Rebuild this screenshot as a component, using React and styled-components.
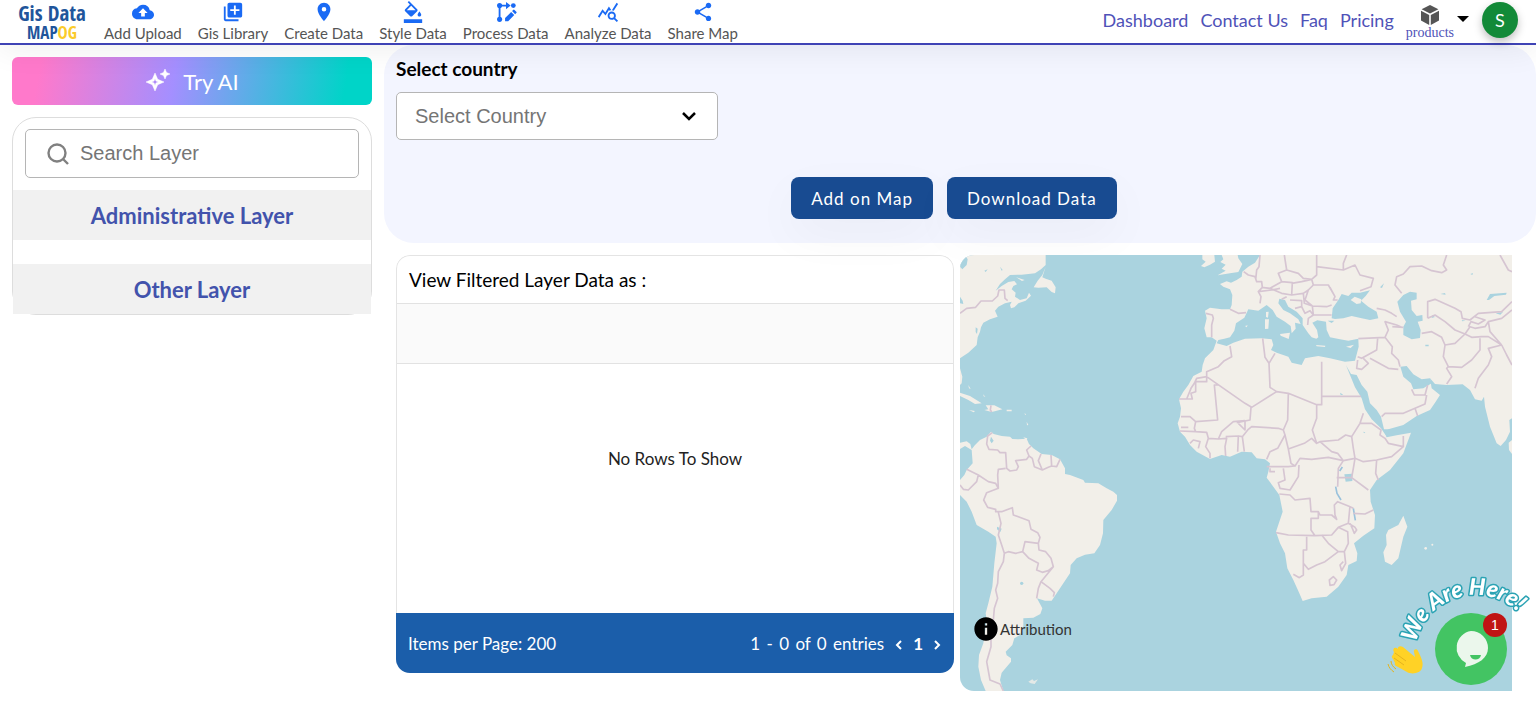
import React from 'react';
import styled, { createGlobalStyle } from 'styled-components';
import {
  MdCloudUpload,
  MdLibraryAdd,
  MdLocationOn,
  MdFormatColorFill,
  MdQueryStats,
  MdShare,
  MdInfo,
} from 'react-icons/md';

const GlobalStyle = createGlobalStyle`
  * {
    box-sizing: border-box;
  }
  body {
    margin: 0;
    background: #fff;
    color: #000;
    font-family: Lato, 'Liberation Sans', sans-serif;
    overflow-x: hidden;
  }
`;

const StyledHeader = styled.header`
  position: relative;
  z-index: 5;
  display: flex;
  align-items: center;
  height: 45px;
  padding: 0 18px;
  border-bottom: 2px solid #3f43b5;
  background: #fff;
  box-shadow: 0 4px 32px #00000012;
`;
const StyledLogo = styled.a`
  display: flex;
  flex-direction: column;
  align-items: center;
  width: 68px;
  margin-right: 18px;
  font-family: 'Open Sans Condensed', 'Liberation Sans Narrow', 'DejaVu Sans Condensed', sans-serif;
  font-weight: bold;
  font-size: 21px;
  line-height: 21px;
  color: #1f559b;
  text-decoration: none;
  white-space: nowrap;
`;
const StyledLogoSub = styled.span`
  font-size: 17px;
  line-height: 17px;
`;
const StyledLogoMark = styled.span`
  color: #fbcb2b;
`;
const StyledTools = styled.nav`
  display: flex;
  gap: 16px;
  flex: 1;
`;
const StyledTool = styled.a`
  display: flex;
  flex-direction: column;
  align-items: center;
  font-size: 15px;
  line-height: 20px;
  color: #555;
  text-decoration: none;
  white-space: nowrap;

  svg {
    width: 22px;
    height: 22px;
    color: #1a6af4;
  }
`;
const StyledLinks = styled.nav`
  display: flex;
  align-items: center;
  gap: 12px;
  margin-bottom: 3px;
`;
const StyledLink = styled.a`
  font-size: 18px;
  line-height: 24px;
  color: #4f52b8;
  text-decoration: none;
  white-space: nowrap;
`;
const StyledProducts = styled.button`
  display: flex;
  align-items: center;
  gap: 2px;
  padding: 3px 0 0;
  border: 0;
  background: none;
  font-family: 'Liberation Serif', serif;
  font-size: 14px;
  line-height: 14px;
  color: #4f52b8;
`;
const StyledProductsLabel = styled.span`
  display: flex;
  flex-direction: column;
  align-items: center;
`;
const StyledAvatar = styled.button`
  width: 36px;
  height: 36px;
  padding: 0;
  border: 0;
  border-radius: 50%;
  background: #128a38;
  color: #fff;
  font-family: inherit;
  font-size: 18px;
  box-shadow: 0 4px 8px #00000040;
`;

const StyledPage = styled.div`
  display: flex;
  align-items: flex-start;
`;
const StyledSidebar = styled.aside`
  flex: 0 0 25%;
  min-width: 0;
  padding: 12px;
`;
const StyledTryAi = styled.button`
  display: flex;
  align-items: center;
  justify-content: center;
  gap: 12px;
  width: 100%;
  height: 48px;
  border: 0;
  border-radius: 6px;
  background: linear-gradient(100deg, #ff79cb 8%, #a48fff 45%, #00d4c8 92%);
  color: #fff;
  font-family: inherit;
  font-size: 22px;
`;
const StyledLayers = styled.div`
  margin-top: 12px;
  border: 1px solid #ddd;
  border-radius: 24px;
`;
const StyledSearch = styled.label`
  display: flex;
  align-items: center;
  gap: 10px;
  height: 49px;
  margin: 11px 12px 12px;
  padding: 0 20px;
  border: 1px solid #b5b5b5;
  border-radius: 5px;

  svg {
    flex: none;
  }
  input {
    width: 100%;
    min-width: 0;
    padding: 0;
    border: 0;
    outline: 0;
    background: none;
    font-family: 'Liberation Sans', sans-serif;
    font-size: 20px;
  }
  input::placeholder {
    color: #757575;
  }
`;
const StyledLayer = styled.h2`
  margin: 0;
  padding: 13px 0 11px;
  background: #f1f1f1;
  color: #4253ac;
  font-size: 22px;
  line-height: 26px;
  font-weight: bold;
  text-align: center;

  & + & {
    margin-top: 24px;
  }
`;

const StyledMain = styled.main`
  flex: 1;
  min-width: 0;
`;
const StyledFilter = styled.section`
  height: 198px;
  padding: 12px 24px 12px 12px;
  border-radius: 30px;
  background: #f3f5ff;
`;
const StyledFilterLabel = styled.label`
  display: block;
  font-size: 19px;
  line-height: 24px;
  font-weight: bold;
`;
const StyledSelectBox = styled.div`
  display: flex;
  align-items: center;
  width: 322px;
  height: 48px;
  margin-top: 11px;
  padding-right: 20px;
  border: 1px solid #b5b5b5;
  border-radius: 5px;
  background: #fff;
`;
const StyledSelect = styled.select`
  flex: 1;
  height: 46px;
  padding: 0 18px;
  border: 0;
  outline: 0;
  appearance: none;
  background: none;
  color: #757575;
  font-family: 'Liberation Sans', sans-serif;
  font-size: 20px;
`;
const StyledActions = styled.div`
  display: flex;
  justify-content: center;
  gap: 14px;
  margin-top: 37px;
`;
const StyledAction = styled.button`
  height: 42px;
  padding: 0 20px;
  border: 0;
  border-radius: 8px;
  background: #184b91;
  color: #fff;
  font-family: inherit;
  font-size: 17px;
  letter-spacing: 1px;
  box-shadow: 0 16px 48px #0000000a;
`;
const StyledResults = styled.div`
  display: flex;
  align-items: flex-start;
  gap: 6px;
  padding: 12px 24px 12px 12px;
`;
const StyledGrid = styled.section`
  flex: 558;
  min-width: 0;
  border-radius: 14px;
  overflow: hidden;
`;
const StyledGridBody = styled.div`
  border: 1px solid #e4e4e4;
  border-bottom: 0;
  border-radius: 14px 14px 0 0;
  overflow: hidden;
`;
const StyledGridTitle = styled.h3`
  margin: 0;
  padding: 12px 12px 11px;
  font-size: 19px;
  line-height: 24px;
  font-weight: normal;
`;
const StyledTable = styled.table`
  width: 100%;
  border-collapse: collapse;

  th {
    height: 60px;
    border-top: 1px solid #e2e2e2;
    border-bottom: 1px solid #e2e2e2;
    background: #fafafa;
  }
  td {
    height: 249px;
    padding: 0 0 60px;
    font-size: 17px;
    text-align: center;
    color: #222;
  }
`;
const StyledPager = styled.footer`
  display: flex;
  align-items: center;
  justify-content: space-between;
  height: 60px;
  padding: 2px 12px 0;
  background: #1b5eaa;
  color: #fff;
  font-size: 17px;
  line-height: 24px;
`;
const StyledPages = styled.div`
  display: flex;
  align-items: center;
  gap: 10px;
  word-spacing: 2px;

  button {
    display: flex;
    padding: 0;
    border: 0;
    background: none;
    color: inherit;
  }
`;
const StyledMap = styled.section`
  position: relative;
  flex: 552;
  min-width: 0;
  height: 436px;
  border-radius: 14px 0 0 14px;
  background: #aad3df;
  overflow: hidden;
`;
const StyledMapDrawing = styled.svg`
  display: block;
  width: 100%;
  height: 100%;
`;
const StyledAttribution = styled.a`
  position: absolute;
  left: 12px;
  bottom: 48px;
  display: flex;
  align-items: center;
  color: #000;
  font-size: 15px;
  line-height: 20px;
  text-decoration: none;

  span {
    color: #333;
  }
`;
const StyledChat = styled.div`
  position: fixed;
  right: 0;
  bottom: 17px;
  z-index: 8;
  width: 150px;
  height: 120px;
`;
const StyledGreeting = styled.svg`
  display: block;
  overflow: visible;
`;
const StyledChatButton = styled.button`
  position: absolute;
  right: 29px;
  bottom: 4px;
  display: flex;
  align-items: center;
  justify-content: center;
  width: 72px;
  height: 72px;
  padding: 0;
  border: 0;
  border-radius: 50%;
  background: #43c463;
`;
const StyledBadge = styled.span`
  position: absolute;
  top: 0;
  right: 0;
  width: 24px;
  border-radius: 50%;
  background: #c01414;
  color: #fff;
  font-family: 'Liberation Sans', sans-serif;
  font-size: 14px;
  line-height: 24px;
`;

const ProcessIcon = () => (
  <svg viewBox="0 0 24 24" fill="currentColor">
    <circle cx="5" cy="5" r="2.8" />
    <circle cx="20" cy="5" r="2.6" />
    <circle cx="5" cy="20" r="2.8" />
    <path d="M4 5h2v15H4zM6 4h6V1l5 4-5 4V6H6z" />
    <path d="M11 22v-3.4l6.6-6.6 3.4 3.4-6.6 6.6zM18.6 11l1.2-1.2a1 1 0 0 1 1.5 0l1.9 1.9a1 1 0 0 1 0 1.5L22 14.4z" />
  </svg>
);

const CubeIcon = () => (
  <svg width="20" height="22" viewBox="0 0 20 22" fill="#555">
    <path d="M10 1l8.4 4.3L10 9.6 1.6 5.3z" />
    <path d="M1 6.8l8.2 4.1v10L1 16.6zM19 6.8l-8.2 4.1v10l8.2-4.3z" />
  </svg>
);

const SparkIcon = () => (
  <svg width="26" height="26" viewBox="0 0 26 26" fill="#fff" stroke="#fff" strokeWidth=".5" strokeLinejoin="round">
    <path
      fillRule="evenodd"
      d="M10 5l2.7 6.3L19 14l-6.3 2.7L10 23l-2.7-6.3L1 14l6.3-2.7zm0 5.6l-1 2.4-2.4 1 2.4 1 1 2.4 1-2.4 2.4-1-2.4-1z"
    />
    <path d="M20 1l1.5 3.5L25 6l-3.5 1.5L20 11l-1.5-3.5L15 6l3.5-1.5z" />
  </svg>
);

const tools = [
  { label: 'Add Upload', icon: <MdCloudUpload /> },
  { label: 'Gis Library', icon: <MdLibraryAdd /> },
  { label: 'Create Data', icon: <MdLocationOn /> },
  { label: 'Style Data', icon: <MdFormatColorFill /> },
  { label: 'Process Data', icon: <ProcessIcon /> },
  { label: 'Analyze Data', icon: <MdQueryStats /> },
  { label: 'Share Map', icon: <MdShare /> },
];
const links = ['Dashboard', 'Contact Us', 'Faq', 'Pricing'];

const Header = () => (
  <StyledHeader>
    <StyledLogo href="#">
      <span>Gis Data</span>
      <StyledLogoSub>
        MAP<StyledLogoMark>OG</StyledLogoMark>
      </StyledLogoSub>
    </StyledLogo>
    <StyledTools>
      {tools.map(({ label, icon }) => (
        <StyledTool key={label} href="#">
          {icon}
          {label}
        </StyledTool>
      ))}
    </StyledTools>
    <StyledLinks>
      {links.map(label => (
        <StyledLink key={label} href="#">{label}</StyledLink>
      ))}
      <StyledProducts type="button">
        <StyledProductsLabel>
          <CubeIcon />
          products
        </StyledProductsLabel>
        <svg width="14" height="20" viewBox="0 0 14 20">
          <path d="M1 4h12L7 10z" fill="#000" />
        </svg>
      </StyledProducts>
      <StyledAvatar type="button">S</StyledAvatar>
    </StyledLinks>
  </StyledHeader>
);

const Sidebar = () => (
  <StyledSidebar>
    <StyledTryAi type="button">
      <SparkIcon />
      Try AI
    </StyledTryAi>
    <StyledLayers>
      <StyledSearch>
        <svg width="24" height="24" viewBox="0 0 24 24" fill="none" stroke="#808080" strokeWidth="2.4">
          <circle cx="11" cy="11" r="8.5" />
          <path d="M17 17l5 5" />
        </svg>
        <input type="text" aria-label="Search Layer" placeholder="Search Layer" />
      </StyledSearch>
      <StyledLayer>Administrative Layer</StyledLayer>
      <StyledLayer>Other Layer</StyledLayer>
    </StyledLayers>
  </StyledSidebar>
);

const WorldMap = () => (
  <StyledMapDrawing viewBox="15 15 1656 1308" preserveAspectRatio="xMidYMid slice" strokeLinejoin="round">
    <g fill="#f2efe9">
      {/* North America and the Caribbean */}
      <path d="M15 15H272V45L258 58 240 70 200 74 165 75 150 88 135 102 122 122 140 108 160 96 178 93 186 103 175 108 170 118 182 128 180 140 195 150 215 145 222 128 228 137 212 152 190 160 178 172 168 175 165 165 170 155 150 160 130 170 120 182 128 200 105 208 85 218 78 232 75 245 68 262 65 285 40 308 15 325z" />
      <path d="M272 50L262 75 248 92 236 112 250 113 275 112 290 126 300 130 302 112 290 92 272 86 262 82z" />
      <path d="M15 355L22 380 20 400 15 405zM15 428L45 438 80 460 60 462 40 450 15 438zM88 480L100 478 92 466 118 466 142 478 125 482 110 486zM155 479h15v5h-15zM42 480l18 3-4 4zM184 82l25 8-8 3z" />
      <path d="M40 405l7 12-5-2zM60 420l8 10M85 433l6 8-5-2zM209 488l4 6-3 1zM215 515l5 10-4 1zM205 562l12 3-3 6z" />
      {/* South America */}
      <path d="M15 578L35 574 46 582 50 598 60 585 75 570 95 560 108 545 116 552 140 558 165 560 172 567 190 568 215 566 222 582 235 595 260 612 290 615 315 628 330 655 330 672 345 675 385 690 390 698 430 700 455 715 475 725 486 735 486 752 470 780 445 810 444 850 435 885 418 910 390 914 365 925 347 945 345 970 325 1000 305 1030 290 1052 270 1052 246 1045 262 1075 256 1092 235 1103 205 1105 205 1130 195 1155 178 1165 172 1185 152 1205 155 1216 168 1225 168 1235 140 1268 135 1290 145 1323H92L78 1290 70 1250 72 1215 85 1180 95 1110 92 1090 100 1060 112 1010 118 940 125 880 122 860 100 845 65 825 50 785 35 755 15 735V690L28 675 35 660 53 640 50 600 30 588 15 597z" />
      <path d="M220 1295l12-7 5 5 12-5-10 14-12-2z" opacity=".8" />
      {/* Ireland and Britain */}
      <path d="M738 48L752 35 742 28V15H778L780 35 765 44 748 52zM800 15L805 28 796 36 812 44 800 56 812 62 788 76 825 70 850 66 862 42 850 25 848 15z" />
      {/* Eurasia joined with Africa */}
      <path d="M915 15L900 38 880 50 862 65 860 80 845 90 828 98 815 94 795 102 805 110 825 118 832 135 830 165 825 178 800 178 765 173 750 182 755 205 748 235 755 262 770 262 785 272 775 300 750 325 743 345 740 365 715 378 700 405 685 425 672 448 678 475 675 500 668 520 675 545 690 560 705 585 725 605 765 627 800 615 825 620 860 605 890 607 905 625 930 628 945 640 940 665 935 683 955 710 973 735 983 785 963 845 975 880 990 910 997 955 1015 990 1033 1030 1043 1053 1070 1045 1115 1040 1150 1010 1175 975 1180 945 1205 933 1207 910 1197 880 1225 857 1258 835 1260 795 1247 755 1245 720 1265 690 1305 660 1345 610 1368 548 1325 556 1295 562 1290 545 1300 538 1345 525 1385 498 1425 480 1440 458 1455 435 1430 415 1425 385 1440 402 1475 405 1523 403 1545 420 1560 448 1580 452 1587 440 1590 470 1605 530 1625 580 1637 588 1653 570 1665 545 1663 510 1671 505V15z" />
      <path d="M1671 570L1661 578 1662 600 1671 612zM1345 797L1357 830 1345 860 1330 925 1310 945 1290 935 1285 907 1295 885 1293 855 1300 840 1330 825z" />
      <circle cx="1412" cy="895" r="4" />
      <circle cx="1432" cy="884" r="3" />
    </g>
    <g fill="#aad3df">
      <path d="M15 28L32 18 38 28 35 45 22 58 15 50zM15 140l8 12 2 10-10-2zM62 232l6 4-2 16-4-6zM135 50l8 10-3 2zM88 62l10-4-6 8zM108 560l8 12-6 8-5-8z" />
      <circle cx="200" cy="1000" r="5" />
      <path d="M126 830l14 6-4 10-10-8z" />
      {/* Mediterranean */}
      <path d="M785 280L790 270 808 266 825 262 838 242 843 220 868 203 880 178 910 182 935 165 953 180 965 200 990 215 1007 228 1010 250 1022 236 1020 218 1037 222 1030 208 1005 190 985 180 970 160 973 146 990 150 1000 170 1025 185 1043 205 1043 225 1060 250 1070 262 1084 266 1090 262 1086 240 1072 218 1087 211 1113 215 1115 240 1125 262 1155 268 1180 272 1210 266 1211 290 1200 332 1170 335 1125 325 1090 318 1050 325 1040 345 1010 338 1000 320 965 308 948 300 955 285 950 268 920 265 870 266 835 278 815 288z" />
      {/* Black Sea, Azov, Marmara */}
      <path d="M1130 205L1133 175 1150 150 1160 132 1180 138 1190 128 1215 128 1245 121 1232 138 1218 152 1240 170 1265 185 1270 205 1245 210 1220 205 1190 198 1165 205 1140 207zM1118 212h20l-8 7z" />
      {/* Caspian and Aral */}
      <path d="M1327 155L1345 135 1365 125 1385 128 1385 148 1368 152 1370 180 1385 198 1402 195 1403 212 1388 215 1397 240 1395 264 1370 268 1345 255 1345 230 1353 215 1335 185z" />
      <path d="M1595 150L1605 132 1655 128 1653 134 1618 138 1602 150zM1456 132l14-3 2 5zM1622 190l22-4-8 8zM1432 195l8 6-10 3zM1411 284h10v5h-10zM1546 72l8-3-2 6zM1275 112l12-12-6 14zM1520 210l12 2-10 2z" />
      {/* Red Sea and Persian Gulf */}
      <path d="M1173 346L1188 372 1205 375 1220 405 1237 425 1245 460 1265 480 1278 500 1287 538 1302 538 1296 562 1278 535 1250 508 1230 478 1220 445 1200 412 1185 375z" />
      <path d="M1336 350L1355 348 1375 373 1400 388 1425 385 1430 400 1405 415 1375 418 1368 400 1345 380z" />
      <path d="M1168 673l24-2v22l-20 2zM1225 545l6 2-4 3zM1155 428l10 6-8 1z" />
      <path d="M1142 710l4 20 12 20M1162 651l-8 12M1195 775l6 36" fill="none" stroke="#9ac2dc" strokeWidth="5" />
    </g>
    <g fill="#f2efe9">
      <path d="M975 252l30-4-4 19-24-10zM930 208h12l-2 28-10 1zM933 186l8-1-2 18-6-2zM1083 285l28 2-1 4-25-2zM1173 290l24-6-10 10zM1187 150l12-10 20 8-2 12-12 2zM870 228l8-2-3 6z" />
    </g>
    <g fill="none" stroke="#d6c5d2" strokeWidth="5">
      {/* Americas */}
      <path d="M15 190L35 175 62 172 78 153 112 153 128 138 132 120 148 120 150 145 158 152M108 466l-2 14 4 6" />
      <path d="M112 548L98 558 95 582 102 598 128 600 135 608 152 608 155 655 165 663 185 660 190 650 182 632 215 628 222 618 215 600 228 588M222 618L232 625 238 650 262 660 250 632 258 612M262 660L280 652 290 648 288 615M290 648L305 650 315 628" />
      <path d="M152 655L130 658 128 675 130 715 122 700 100 695 70 675 35 658M70 675L65 695 40 720 25 718 15 705M130 715L95 728 86 750 98 772 122 778 122 785 140 785 172 773 175 795 222 812 228 838 248 848 255 862 250 880 210 875 203 905M130 787L138 820 130 855 140 885 148 910 160 905 182 910 203 905 222 925 250 940 245 960 262 967 280 962 295 950 288 925 272 905 252 900 250 880M148 910L145 935 130 965 128 1000 122 1020 128 1045 118 1075 115 1110 108 1150 108 1190 95 1235 105 1290 135 1302 145 1323M295 950L258 995 250 1015 245 1045M258 995L285 1015 298 1028 295 1040" />
      {/* West and North Africa */}
      <path d="M825 288L830 320 808 332 790 350 755 365V380L725 385 718 400 708 415 695 447H672M755 380V395H722V425L708 430 712 447H695M755 380L870 460 890 472 965 425 1000 430 1085 464H1100V335M790 405H778L788 510 722 515 705 500H678M722 515L718 535 722 545 675 543M678 532h22M722 545L755 547 760 565 752 590 765 610V625M705 580L715 570 735 575 730 595M760 565L790 567 800 545 835 515 870 512M790 567L815 565 810 590 812 618M812 560L850 558 848 605M850 558L862 560 868 605M870 512V540L850 520M862 560L880 538 890 530 970 535 985 540 990 555 968 595 945 605 935 628M888 472L885 510 845 518M1000 430L998 510 985 540M965 425L945 412 942 340 930 322 923 265M942 340L960 310M1085 464V505L1072 540 1085 580" />
      {/* Central and East Africa */}
      <path d="M1100 439H1218M1225 490L1215 520 1190 560 1172 555 1150 570 1095 575 1085 580 1070 565 1048 580 1000 597 990 555M1215 520L1250 520 1278 540 1275 555 1290 565 1300 580 1345 590 1310 620 1265 630 1225 635 1200 625 1165 632 1148 610 1130 605 1095 575M1190 560L1195 595 1200 625M1000 597L1008 640 1020 648 1035 625 1070 628 1120 622 1165 632M935 650H1000L1018 648M945 655V665H960M985 655L990 690 970 698 975 715 1005 720 1030 680 1032 645M973 732L1005 735 1020 750 1065 745 1068 785 1090 785 1095 795 1130 795 1145 808 1140 795 1138 765 1148 755 1180 768 1195 775M1090 785V805H1068V840L1080 857M963 848L1000 855 1080 857 1130 855 1150 832 1180 820 1185 768M1180 820L1200 832 1205 840 1198 850 1192 835 1185 820M1195 790L1230 792 1255 780M1055 860V900H1045V975L1033 983 1015 973M1045 940L1060 958 1085 945 1110 935 1150 905 1168 905 1180 880 1178 845 1150 832M1100 855L1120 880 1150 905M1168 905L1172 940 1160 962 1155 945 1165 935M1145 683H1190L1240 720M1165 632L1150 655 1148 710M1200 625L1195 655 1190 683M1265 630L1262 670 1270 690M1345 558V590" />
      <path d="M1123 990l12-10 10 10-8 14-12 2z" />
      {/* Middle East */}
      <path d="M1210 266L1290 262 1312 290 1310 310 1330 330 1335 350M1268 265L1265 300 1220 325 1208 320M1208 330L1205 355 1220 358 1240 340 1225 325M1245 325L1300 355 1330 358M1280 500L1290 490 1345 490 1380 475 1410 462 1415 435M1380 475L1388 498M1370 418L1378 435 1410 435 1418 405M1312 230L1345 232M1290 262L1300 240 1290 215 1325 225 1340 232" />
      {/* Europe */}
      <path d="M825 178L850 190 873 188M866 65L880 75 900 80 905 95 920 95 922 112 910 125 918 140 915 160M915 15L912 50 905 60 902 90M988 15L995 60 970 70 980 95 945 115 920 112M995 60L1030 70 1045 85 1070 88 1085 75 1085 15M1085 50L1165 60 1165 40 1175 15M1165 60L1200 45 1215 75 1255 85 1248 110 1215 122M1070 88L1075 105 1060 120 1045 130 1010 135 980 130 945 115M1075 105L1120 105 1140 140 1135 150 1148 150M1060 120L1050 150 1072 168 1115 170 1130 165M1045 130L1048 160 1072 168 1075 195 1130 195M1005 150L1040 152 1040 170 1020 175M1040 170L1050 190 1065 182 1075 195 1060 205 1058 225M1140 140l-15-28M1265 175L1290 180 1310 190 1325 200M753 190L772 195 775 205 770 225V262M910 125L950 120 975 115M1010 100L1040 95 1070 88M980 95L1012 98 1010 135M995 140l-15 8" />
      {/* Central and South Asia */}
      <path d="M1340 130L1320 105 1325 80 1345 72 1365 50 1400 48 1430 62 1460 68 1475 60 1465 45 1475 15M1418 205V155L1440 148 1500 175 1518 185 1522 205 1545 210 1570 190 1640 185 1671 155M1418 205L1440 195 1470 215 1500 240 1530 252 1545 230 1560 235 1590 230 1600 215 1640 205 1671 180M1400 250L1430 245 1460 262 1470 285 1500 280 1530 252 1550 262 1580 260 1600 260 1640 285M1470 285L1465 320 1480 350 1475 355 1490 380 1475 402M1480 350L1520 352 1550 330 1575 300 1575 265M1560 415L1570 385 1600 345 1610 320 1600 295 1640 285 1655 315 1671 345M1560 200L1590 210 1570 222 1548 215 1540 230M1635 15L1660 60 1671 65M1600 215L1605 245 1640 285" />
    </g>
  </StyledMapDrawing>
);

const ChatWidget = () => (
  <StyledChat>
    <StyledGreeting width="150" height="120" viewBox="0 0 150 120">
      <defs>
        <path id="greeting-arc" d="M30 74A61 61 0 0 1 149 73" />
      </defs>
      <text
        fontFamily="Lato, sans-serif"
        fontWeight="900"
        fontStyle="italic"
        fontSize="23"
        fill="#fff"
        stroke="#2ba3b4"
        strokeWidth="3"
        strokeLinejoin="round"
        paintOrder="stroke"
      >
        <textPath href="#greeting-arc">We Are Here!</textPath>
      </text>
      <path
        d="M12 80c-3-3-6 0-4 3l-1 3c-2 1-1 3 0 4l2 4c-1 2 1 3 3 4l9 5c5 3 14 1 15-4 2-5-1-11-4-17-1-3-5-2-4 1l1 5-12-10c-3-2-6 0-5 2z"
        fill="#ffd226"
      />
      <path d="M5 92c0 3 2 6 5 8M2 95c1 4 3 6 6 8M9 84l11 8M8 89l10 7" fill="none" stroke="#e4b31f" strokeWidth="1" />
    </StyledGreeting>
    <StyledChatButton type="button" aria-label="Open chat">
      <svg width="36" height="38" viewBox="0 0 36 38">
        <path d="M18 1a17 17 0 0 1 17 17c0 10-9 16-23 19l1-4A17 17 0 0 1 18 1z" fill="#ebf7ec" />
        <path d="M17 25h11c-1 6-10 6-11 0z" fill="#43c463" />
      </svg>
      <StyledBadge>1</StyledBadge>
    </StyledChatButton>
  </StyledChat>
);

const Chevron = ({ flip }) => (
  <svg width="9" height="14" viewBox="0 0 9 14" fill="none" stroke="currentColor" strokeWidth="2">
    <path d={flip ? 'M2 4l4 4-4 4' : 'M7 4L3 8l4 4'} />
  </svg>
);

const App = () => (
  <>
    <GlobalStyle />
    <Header />
    <StyledPage>
      <Sidebar />
      <StyledMain>
        <StyledFilter>
          <StyledFilterLabel htmlFor="country">Select country</StyledFilterLabel>
          <StyledSelectBox>
            <StyledSelect id="country">
              <option>Select Country</option>
            </StyledSelect>
            <svg width="16" height="16" viewBox="0 0 16 16" fill="none" stroke="#000" strokeWidth="2.5">
              <path d="M2 5l6 6 6-6" />
            </svg>
          </StyledSelectBox>
          <StyledActions>
            <StyledAction type="button">Add on Map</StyledAction>
            <StyledAction type="button">Download Data</StyledAction>
          </StyledActions>
        </StyledFilter>
        <StyledResults>
          <StyledGrid>
            <StyledGridBody>
              <StyledGridTitle>View Filtered Layer Data as :</StyledGridTitle>
              <StyledTable>
                <thead>
                  <tr><th aria-label="Columns" /></tr>
                </thead>
                <tbody>
                  <tr><td>No Rows To Show</td></tr>
                </tbody>
              </StyledTable>
            </StyledGridBody>
            <StyledPager>
              <span>Items per Page: 200</span>
              <StyledPages>
                <span>1 - 0 of 0 entries</span>
                <button type="button" aria-label="Previous page"><Chevron /></button>
                <strong>1</strong>
                <button type="button" aria-label="Next page"><Chevron flip /></button>
              </StyledPages>
            </StyledPager>
          </StyledGrid>
          <StyledMap>
            <WorldMap />
            <StyledAttribution href="#">
              <MdInfo size={28} />
              <span>Attribution</span>
            </StyledAttribution>
          </StyledMap>
        </StyledResults>
      </StyledMain>
    </StyledPage>
    <ChatWidget />
  </>
);

export default App;
